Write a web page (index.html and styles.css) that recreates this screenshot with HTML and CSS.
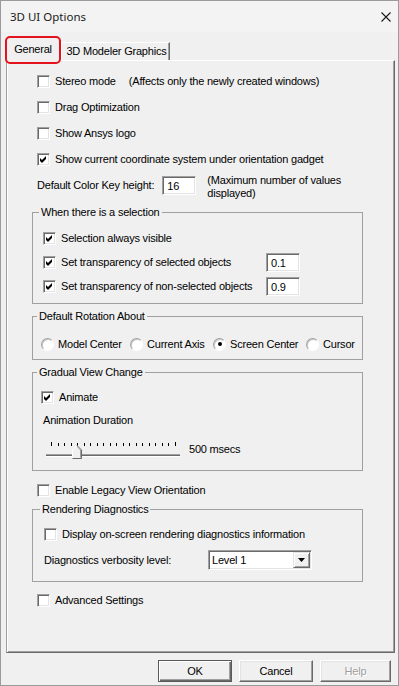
FILE: index.html
```html
<!doctype html>
<html lang="en">
<head>
  <meta charset="UTF-8"/>
  <meta content="width=device-width, initial-scale=1" name="viewport">
  <title>3D UI Options</title>
  <link rel="stylesheet" href="styles.css">
</head>
<body>
<div class="window">
  <div class="titlebar">
    <span class="title">3D UI Options</span>
    <svg class="close" width="10" height="10" viewBox="0 0 10 10">
      <path d="M0.5 0.5L9.5 9.5M9.5 0.5L0.5 9.5" stroke="#1a1a1a" stroke-width="1.1" fill="none"/>
    </svg>
  </div>

  <div class="tabs">
    <div class="tab tab-active">General</div>
    <div class="tab">3D Modeler Graphics</div>
  </div>

  <div class="panel">
    <div class="row">
      <span class="check"></span>
      <span>Stereo mode</span>
      <span class="hint">(Affects only the newly created windows)</span>
    </div>
    <div class="row">
      <span class="check"></span>
      <span>Drag Optimization</span>
    </div>
    <div class="row">
      <span class="check"></span>
      <span>Show Ansys logo</span>
    </div>
    <div class="row">
      <span class="check on"><svg width="9" height="9" viewBox="0 0 9 9"><polygon points="1,3 3,5 7,1 7,4 3,8 1,6" fill="#000"/></svg></span>
      <span>Show current coordinate system under orientation gadget</span>
    </div>
    <div class="row">
      <span>Default Color Key height:</span>
      <span class="field field-key">16</span>
      <span class="hint hint-wrap">(Maximum number of values<br>displayed)</span>
    </div>

    <fieldset class="group">
      <legend>When there is a selection</legend>
      <div class="grow sel">
        <span class="check on"><svg width="9" height="9" viewBox="0 0 9 9"><polygon points="1,3 3,5 7,1 7,4 3,8 1,6" fill="#000"/></svg></span>
        <span>Selection always visible</span>
      </div>
      <div class="grow sel">
        <span class="check on"><svg width="9" height="9" viewBox="0 0 9 9"><polygon points="1,3 3,5 7,1 7,4 3,8 1,6" fill="#000"/></svg></span>
        <span>Set transparency of selected objects</span>
        <span class="field">0.1</span>
      </div>
      <div class="grow sel">
        <span class="check on"><svg width="9" height="9" viewBox="0 0 9 9"><polygon points="1,3 3,5 7,1 7,4 3,8 1,6" fill="#000"/></svg></span>
        <span>Set transparency of non-selected objects</span>
        <span class="field">0.9</span>
      </div>
    </fieldset>

    <fieldset class="group group-rotation">
      <legend>Default Rotation About</legend>
      <div class="grow radios">
        <div class="option"><span class="radio"></span>Model Center</div>
        <div class="option"><span class="radio"></span>Current Axis</div>
        <div class="option"><span class="radio on"></span>Screen Center</div>
        <div class="option"><span class="radio"></span>Cursor</div>
      </div>
    </fieldset>

    <fieldset class="group group-view">
      <legend>Gradual View Change</legend>
      <div class="grow animate">
        <span class="check on"><svg width="9" height="9" viewBox="0 0 9 9"><polygon points="1,3 3,5 7,1 7,4 3,8 1,6" fill="#000"/></svg></span>
        <span>Animate</span>
      </div>
      <div class="caption">Animation Duration</div>
      <div class="slider">
        <svg width="140" height="26" viewBox="0 0 140 26">
          <g fill="#000">
            <rect x="6" y="6" width="1" height="4"/>
            <rect x="13" y="7" width="1" height="3"/>
            <rect x="19" y="7" width="1" height="3"/>
            <rect x="26" y="7" width="1" height="3"/>
            <rect x="32" y="7" width="1" height="3"/>
            <rect x="39" y="7" width="1" height="3"/>
            <rect x="45" y="7" width="1" height="3"/>
            <rect x="52" y="7" width="1" height="3"/>
            <rect x="58" y="7" width="1" height="3"/>
            <rect x="65" y="7" width="1" height="3"/>
            <rect x="71" y="7" width="1" height="3"/>
            <rect x="78" y="7" width="1" height="3"/>
            <rect x="84" y="7" width="1" height="3"/>
            <rect x="91" y="7" width="1" height="3"/>
            <rect x="97" y="7" width="1" height="3"/>
            <rect x="104" y="7" width="1" height="3"/>
            <rect x="110" y="7" width="1" height="3"/>
            <rect x="117" y="7" width="1" height="3"/>
            <rect x="123" y="7" width="1" height="3"/>
            <rect x="130" y="6" width="1" height="4"/>
          </g>
          <rect x="1" y="18" width="134" height="1" fill="#a0a0a0"/>
          <rect x="1" y="19" width="134" height="1" fill="#696969"/>
          <rect x="1" y="20" width="134" height="1" fill="#ffffff"/>
          <polygon points="27.5,22.5 27.5,14 32,9.5 36.5,14 36.5,22.5" fill="#f0f0f0"/>
          <polyline points="27.5,22.5 27.5,14 32,9.5" fill="none" stroke="#ffffff"/>
          <polyline points="32,9.5 36.5,14 36.5,22.5 27.5,22.5" fill="none" stroke="#696969"/>
          <polyline points="32.5,11 35.5,14 35.5,21.5" fill="none" stroke="#a0a0a0"/>
        </svg>
        <span>500 msecs</span>
      </div>
    </fieldset>

    <div class="row legacy">
      <span class="check"></span>
      <span>Enable Legacy View Orientation</span>
    </div>

    <fieldset class="group group-render">
      <legend>Rendering Diagnostics</legend>
      <div class="grow diag">
        <span class="check"></span>
        <span>Display on-screen rendering diagnostics information</span>
      </div>
      <div class="grow diag verbosity">
        <span>Diagnostics verbosity level:</span>
        <div class="select">
          <span class="select-value">Level 1</span>
          <span class="select-button">
            <svg width="7" height="4" viewBox="0 0 7 4"><polygon points="0,0 7,0 3.5,4" fill="#000"/></svg>
          </span>
        </div>
      </div>
    </fieldset>

    <div class="row advanced">
      <span class="check"></span>
      <span>Advanced Settings</span>
    </div>
  </div>

  <div class="buttons">
    <div class="button button-default">OK</div>
    <div class="button">Cancel</div>
    <div class="button button-disabled">Help</div>
  </div>
</div>
</body>
</html>
```

FILE: styles.css
```css
*, *:before, *:after {
  box-sizing: border-box;
}

body {
  margin: 0;
  background: #f0f0f0;
  font-family: "Liberation Sans", Arial, sans-serif;
  font-size: 11px;
  letter-spacing: -0.2px;
  line-height: 13px;
  color: #000;
}

.window {
  width: 399px;
  height: 686px;
  border: 1px solid #9b9b9b;
  display: flex;
  flex-direction: column;
  background: #f0f0f0;
}

/* title bar */

.titlebar {
  height: 31px;
  flex: none;
  display: flex;
  align-items: center;
  justify-content: space-between;
  padding: 0 7px 0 9px;
  background: #f3f3f3;
}

.titlebar .title {
  font-family: "Noto Sans", "Open Sans", sans-serif;
  font-size: 11.5px;
  letter-spacing: 0;
  color: #1a1a1a;
}

/* tabs */

.tabs {
  height: 28px;
  flex: none;
  display: flex;
  align-items: flex-start;
  padding-left: 4px;
}

.tab {
  margin-top: 10px;
  height: 18px;
  width: 109px;
  padding-left: 2px;
  border-top: 1px solid #fff;
  border-left: 1px solid #fff;
  border-right: 1px solid #696969;
  box-shadow: inset -1px 0 #a0a0a0;
  display: flex;
  align-items: center;
  justify-content: center;
  white-space: nowrap;
}

.tab-active {
  position: relative;
  z-index: 2;
  margin-top: 4px;
  width: 56px;
  height: 28px;
  padding: 0 0 2px;
  border: 2.5px solid #e3121b;
  border-radius: 5px;
  box-shadow: none;
  background: #f0f0f0;
}

/* tab page */

.panel {
  margin-left: 5px;
  width: 389px;
  height: 593px;
  flex: none;
  padding: 7px 0 0 30px;
  border-top: 1px solid #fff;
  border-left: 1px solid #a0a0a0;
  border-right: 1px solid #696969;
  border-bottom: 1px solid #696969;
  box-shadow: inset 1px 0 #fff, inset -1px -1px #a0a0a0;
}

.row {
  height: 26px;
  display: flex;
  align-items: center;
  white-space: nowrap;
}

.check {
  width: 13px;
  height: 13px;
  flex: none;
  margin-right: 5px;
  border: 1px solid;
  border-color: #a0a0a0 #fff #fff #a0a0a0;
  box-shadow: inset 1px 1px #696969, inset -1px -1px #e3e3e3;
  background: #fff;
  padding: 1px 0 0 1px;
  display: flex;
}

.hint {
  margin-left: 13px;
}

.hint-wrap {
  margin-left: 11px;
  margin-top: 3px;
}

.field {
  width: 34px;
  height: 19px;
  flex: none;
  padding: 3px 0 0 4px;
  border: 1px solid;
  border-color: #a0a0a0 #fff #fff #a0a0a0;
  box-shadow: inset 1px 1px #696969, inset -1px -1px #e3e3e3;
  background: #fff;
}

.field-key {
  margin-left: 8px;
  margin-top: 1px;
}

/* group boxes */

.group {
  margin: 8px 0 0 -5px;
  width: 331px;
  min-width: 0;
  border: 1px solid #a0a0a0;
  padding: 7px 0 5px 10px;
}

.group legend {
  margin-left: -4px;
  padding: 0 2px;
  line-height: 13px;
}

.grow {
  height: 24px;
  display: flex;
  align-items: center;
  white-space: nowrap;
}

.sel {
  display: grid;
  grid-template-columns: 13px 200px 34px;
  column-gap: 5px;
}

.group-rotation {
  margin-top: 6px;
  padding: 9px 0 3px 8px;
}

.radios {
  display: grid;
  grid-template-columns: 89px 83px 93px auto;
}

.option {
  display: flex;
  align-items: center;
}

.radio {
  position: relative;
  width: 13px;
  height: 13px;
  flex: none;
  margin-right: 4px;
  border-radius: 50%;
  border: 1px solid;
  border-color: #a0a0a0 #fff #fff #a0a0a0;
  box-shadow: inset 1px 1px #c8c8c8;
  background: #fff;
}

.radio.on:after {
  content: "";
  position: absolute;
  top: 3.5px;
  left: 3.5px;
  width: 4px;
  height: 4px;
  border-radius: 50%;
  background: #000;
}

.group-view {
  margin-top: 6px;
  padding: 6px 0 8px 8px;
}

.caption {
  margin-top: 5px;
  padding-left: 2px;
}

.slider {
  margin-top: 9px;
  height: 26px;
  display: flex;
  align-items: center;
  gap: 4px;
  padding-left: 4px;
}

.slider svg {
  display: block;
}

.slider span {
  margin-top: 1px;
}

.legacy {
  margin-top: 6px;
}

.group-render {
  margin-top: 0;
  padding: 6px 0 9px 11px;
}

.verbosity {
  margin-top: 2px;
  display: grid;
  grid-template-columns: 164px 104px;
}

.select {
  height: 20px;
  display: flex;
  align-items: center;
  justify-content: space-between;
  padding: 1px 1px 1px 3px;
  border: 1px solid;
  border-color: #a0a0a0 #fff #fff #a0a0a0;
  box-shadow: inset 1px 1px #696969, inset -1px -1px #e3e3e3;
  background: #fff;
}

.select-button {
  width: 17px;
  height: 16px;
  display: flex;
  align-items: center;
  justify-content: center;
  border: 1px solid;
  border-color: #e3e3e3 #696969 #696969 #e3e3e3;
  box-shadow: inset 1px 1px #fff, inset -1px -1px #a0a0a0;
  background: #f0f0f0;
}

.advanced {
  margin-top: 5px;
}

/* dialog buttons */

.buttons {
  margin-top: 7px;
  display: flex;
  justify-content: flex-end;
  gap: 7px;
  padding-right: 7px;
}

.button {
  width: 74px;
  height: 22px;
  display: flex;
  align-items: center;
  justify-content: center;
  border: 1px solid;
  border-color: #fff #696969 #696969 #fff;
  box-shadow: inset -1px -1px #a0a0a0, inset 1px 1px #e3e3e3;
  background: #f0f0f0;
}

.button-default {
  border: 1px solid #5a5a5a;
  box-shadow: inset 1px 1px #fff, inset -1px -1px #696969, inset -2px -2px #a0a0a0;
}

.button-disabled {
  width: 71px;
  color: #a0a0a0;
  text-shadow: 1px 1px #fff;
}
```
